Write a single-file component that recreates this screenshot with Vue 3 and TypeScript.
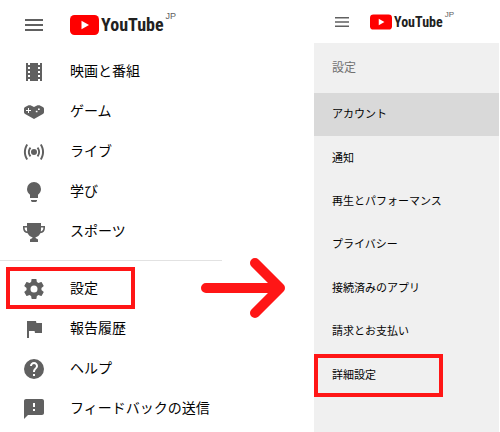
<script setup lang="ts">
interface MenuItem {
  label: string
  icon: string
  marked?: boolean
}

interface SettingItem {
  label: string
  selected?: boolean
  marked?: boolean
}

const explore: MenuItem[] = [
  {
    label: '映画と番組',
    icon: 'M18 3v2h-2V3H8v2H6V3H4v18h2v-2h2v2h8v-2h2v2h2V3h-2zM8 17H6v-2h2v2zm0-4H6v-2h2v2zm0-4H6V7h2v2zm10 8h-2v-2h2v2zm0-4h-2v-2h2v2zm0-4h-2V7h2v2z',
  },
  {
    label: 'ゲーム',
    icon: 'M6.500 5.200L8.500 5.200L12 7L15.500 5.200L17.500 5.200L21.300 7.200L22 8.500V12.500L21.300 13.700L12 19L2.700 13.700L2 12.500V8.500L2.700 7.200z M6 8v2H4v1h2v2h1v-2h2v-1H7V8z M16 8.500v1.500h1.700V8.500z M13.800 10.800v1.500h1.700v-1.500z',
  },
  {
    label: 'ライブ',
    icon: 'M12 9a3 3 0 1 0 0 6a3 3 0 1 0 0-6z M16.2 7.1l-1.4 1.1c1.9 2.3 1.9 5.3 0 7.6l1.4 1.1c2.5-3 2.5-6.8 0-9.8z M7.8 7.1c-2.5 3-2.5 6.8 0 9.8l1.4-1.1c-1.9-2.3-1.9-5.3 0-7.6z M19.6 4.1l-1.6.9c2.8 4.4 2.8 9.6 0 14l1.6.9c3.3-5 3.3-10.8 0-15.8z M4.4 4.1c-3.3 5-3.3 10.8 0 15.8l1.6-.9c-2.8-4.4-2.8-9.6 0-14z',
  },
  {
    label: '学び',
    icon: 'M12 2a7 7 0 0 0-7 7c0 2.5 1.2 4.3 3 5.7V18h8v-3.300c1.8-1.400 3-3.200 3-5.700a7 7 0 0 0-7-7z M9 20h6v1l-1 1h-4l-1-1z',
  },
  {
    label: 'スポーツ',
    icon: 'M5 3h14v3h4v2c0 3-1.700 5-4.700 5.300C17.300 15.500 15.500 17 13.500 17.300c0 .9.500 1.200 1.500 1.500l1 .8V22H8v-2.400l1-.8c1-.3 1.500-.6 1.500-1.500C8.500 17 6.700 15.500 5.700 13.300C2.700 13 1 11 1 8V6h4z M5 7.500H2.600c0 2 .8 3.600 2.600 4.100C5 10.500 5 9 5 7.500z M19 7.500c0 1.500 0 3-.2 4.100 1.800-.5 2.600-2.100 2.600-4.100z',
  },
]

const support: MenuItem[] = [
  {
    label: '設定',
    marked: true,
    icon: 'M19.430 12.980c.04-.32.07-.64.07-.98s-.03-.66-.07-.98l2.110-1.650c.19-.15.24-.42.12-.64l-2-3.460c-.12-.22-.39-.3-.61-.22l-2.490 1c-.52-.4-1.080-.73-1.690-.98l-.38-2.650C14.460 2.180 14.250 2 14 2h-4c-.25 0-.46.18-.49.42l-.38 2.650c-.61.25-1.170.59-1.690.98l-2.490-1c-.23-.09-.49 0-.61.22l-2 3.460c-.13.22-.07.49.12.64l2.110 1.650c-.04.32-.07.65-.07.98s.03.66.07.98l-2.110 1.650c-.19.15-.24.42-.12.64l2 3.460c.12.22.39.3.61.22l2.490-1c.52.4 1.080.73 1.690.98l.38 2.650c.03.24.24.42.49.42h4c.25 0 .46-.18.49-.42l.38-2.650c.61-.25 1.170-.59 1.690-.98l2.490 1c.23.09.49 0 .61-.22l2-3.460c.12-.22.07-.49-.12-.64l-2.110-1.650zM12 15.500a3.500 3.500 0 1 1 0-7a3.500 3.500 0 0 1 0 7z',
  },
  { label: '報告履歴', icon: 'M14.400 6L14 4H5v17h2v-7h5.600l.4 2h7V6z' },
  {
    label: 'ヘルプ',
    icon: 'M12 2a10 10 0 1 0 0 20a10 10 0 1 0 0-20zm1 17h-2v-2h2v2zm2.070-7.750l-.9.920C13.450 12.900 13 13.500 13 15h-2v-.5c0-1.100.45-2.100 1.170-2.830l1.240-1.260c.37-.36.59-.86.59-1.410 0-1.100-.9-2-2-2s-2 .9-2 2H8c0-2.210 1.790-4 4-4s4 1.790 4 4c0 .88-.36 1.680-.93 2.250z',
  },
  {
    label: 'フィードバックの送信',
    icon: 'M20 2H4c-1.100 0-1.990.9-1.990 2L2 22l4-4h14c1.100 0 2-.9 2-2V4c0-1.100-.9-2-2-2zm-7 12h-2v-2h2v2zm0-4h-2V6h2v4z',
  },
]

const menuGroups: MenuItem[][] = [explore, support]

const settings: SettingItem[] = [
  { label: 'アカウント', selected: true },
  { label: '通知' },
  { label: '再生とパフォーマンス' },
  { label: 'プライバシー' },
  { label: '接続済みのアプリ' },
  { label: '請求とお支払い' },
  { label: '詳細設定', marked: true },
]
</script>

<template>
  <main class="guide">
    <section class="panel drawer">
      <header class="masthead">
        <button class="burger" type="button" aria-label="メニュー">
          <svg viewBox="0 0 18 12"><path d="M0 0h18v2H0zM0 5h18v2H0zM0 10h18v2H0z" /></svg>
        </button>
        <a class="logo" href="#">
          <svg class="play" viewBox="0 0 29 20">
            <rect width="29" height="20" rx="4.500" fill="#f00" />
            <path d="M11.500 5.700v8.600l7.500-4.300z" fill="#fff" />
          </svg>
          <span class="word">YouTube</span>
          <span class="region">JP</span>
        </a>
      </header>
      <nav>
        <ul v-for="(group, g) in menuGroups" :key="g" class="group">
          <li v-for="item in group" :key="item.label">
            <a class="entry" :class="{ marked: item.marked }" href="#">
              <svg class="icon" viewBox="0 0 24 24"><path fill-rule="evenodd" :d="item.icon" /></svg>
              <span class="label">{{ item.label }}</span>
            </a>
          </li>
        </ul>
      </nav>
    </section>

    <svg class="arrow" viewBox="0 0 86 62">
      <path d="M6 31H79M55 6L80 31L55 56" />
    </svg>

    <section class="panel account">
      <header class="masthead small">
        <button class="burger" type="button" aria-label="メニュー">
          <svg viewBox="0 0 14 10"><path d="M0 0h14v1.500H0zM0 4.200h14v1.500H0zM0 8.500h14V10H0z" /></svg>
        </button>
        <a class="logo" href="#">
          <svg class="play" viewBox="0 0 29 20">
            <rect width="29" height="20" rx="4.500" fill="#f00" />
            <path d="M11.500 5.700v8.600l7.500-4.300z" fill="#fff" />
          </svg>
          <span class="word">YouTube</span>
          <span class="region">JP</span>
        </a>
      </header>
      <nav class="side">
        <h2>設定</h2>
        <ul class="settings">
          <li v-for="item in settings" :key="item.label">
            <a :class="{ selected: item.selected, marked: item.marked }" href="#">{{ item.label }}</a>
          </li>
        </ul>
      </nav>
    </section>
  </main>
</template>

<style>
body {
  margin: 0;
  background: #fff;
}
</style>

<style scoped>
.guide {
  position: relative;
  display: grid;
  grid-template-columns: 222fr 92fr 185fr;
  min-height: 100vh;
  padding-right: 1px;
  box-sizing: border-box;
  overflow: hidden;
  font-family: "Noto Sans CJK JP", sans-serif;
  color: #030303;
}

.panel {
  display: flex;
  flex-direction: column;
  min-width: 0;
}

.account {
  grid-column: 3;
}

ul {
  list-style: none;
  margin: 0;
  padding: 0;
}

a {
  color: inherit;
  text-decoration: none;
}

.masthead {
  display: flex;
  align-items: center;
  gap: 27px;
  height: 50px;
  margin-bottom: 2px;
  padding-left: 25px;
  box-sizing: border-box;
}

.burger {
  display: flex;
  width: 18px;
  padding: 0;
  border: 0;
  background: none;
}

.burger svg {
  width: 100%;
  fill: #606060;
}

.logo {
  display: flex;
  align-items: center;
  gap: 2px;
  height: 20px;
  color: #212121;
}

.play {
  width: 29px;
  height: 20px;
}

.word {
  font: bold 18px/20px "Liberation Sans Narrow", "Roboto Condensed", "Open Sans Condensed", Roboto, sans-serif;
}

.region {
  align-self: flex-start;
  margin-top: -5px;
  font: 9px/12px "Liberation Sans", sans-serif;
  color: #606060;
}

.small {
  gap: 21px;
  height: 43px;
  margin-bottom: 0;
  padding-left: 21px;
}

.small .burger {
  width: 14px;
}

.small .logo {
  height: 16px;
}

.small .play {
  width: 22px;
  height: 16px;
}

.small .word {
  font-size: 14px;
  line-height: 16px;
}

.small .region {
  font-size: 8px;
}

.group + .group {
  margin-top: 8px;
  padding-top: 8px;
  border-top: 1px solid #e2e2e2;
}

.entry {
  position: relative;
  display: flex;
  align-items: center;
  gap: 24px;
  height: 40px;
  padding-left: 22px;
  font-size: 14px;
  line-height: 20px;
  white-space: nowrap;
}

.label {
  padding-bottom: 4px;
}

.icon {
  width: 24px;
  height: 24px;
  flex: none;
  fill: #606060;
}

.marked::after {
  content: "";
  position: absolute;
  top: 0;
  bottom: 0;
  left: 0;
  width: 129px;
  box-sizing: border-box;
  border: 4px solid #ff1616;
}

.entry.marked::after {
  top: -2px;
  left: 6px;
}

.arrow {
  position: absolute;
  top: 257px;
  left: 40%;
  width: 86px;
  height: 62px;
  fill: none;
  stroke: #ff1616;
  stroke-width: 10;
  stroke-linecap: round;
  stroke-linejoin: round;
}

.side {
  flex: 1;
  background: #f0f0f0;
}

h2 {
  margin: 0;
  padding: 0 18px 2px;
  font-size: 12px;
  font-weight: 400;
  line-height: 48px;
  color: #707070;
}

.settings {
  display: grid;
  grid-auto-rows: 1fr;
  height: 304px;
}

.settings li {
  display: grid;
}

.settings a {
  position: relative;
  display: flex;
  align-items: center;
  padding: 0 0 3px 18px;
  font-size: 11px;
  line-height: 16px;
  white-space: nowrap;
}

.settings .selected {
  background: #d9d9d9;
}
</style>
